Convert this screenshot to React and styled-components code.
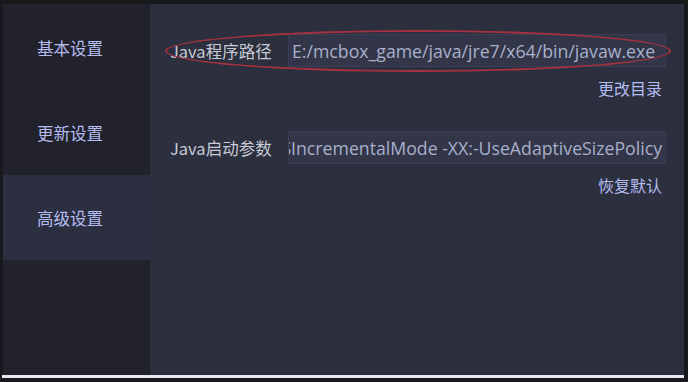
import React from 'react';
import styled, { createGlobalStyle } from 'styled-components';

const GlobalStyle = createGlobalStyle`
	html, body {
		margin: 0;
		padding: 0;
		background: #18191d;
	}
	#root {
		width: 688px;
		height: 382px;
		overflow: hidden;
	}
`;

const MENU = ['基本设置', '更新设置', '高级设置'];

const App = () => {
	return (
		<>
			<GlobalStyle />
			<S_FRAME>
				<S_WINDOW>
					<S_SIDEBAR>
						{MENU.map((item, i) => (
							<S_MENU_ITEM key={item} active={i === 2}>
								{item}
							</S_MENU_ITEM>
						))}
					</S_SIDEBAR>
					<S_MAIN>
						<S_FIELD>
							<S_ROW>
								<S_LABEL>Java程序路径</S_LABEL>
								<S_INPUT>E:/mcbox_game/java/jre7/x64/bin/javaw.exe</S_INPUT>
								<S_MARK />
							</S_ROW>
							<S_LINK>更改目录</S_LINK>
						</S_FIELD>
						<S_FIELD>
							<S_ROW>
								<S_LABEL>Java启动参数</S_LABEL>
								<S_INPUT scrolled>
									<span>-XX:+UseConcMarkSweepGC -XX:+CMSIncrementalMode -XX:-UseAdaptiveSizePolicy</span>
								</S_INPUT>
							</S_ROW>
							<S_LINK>恢复默认</S_LINK>
						</S_FIELD>
					</S_MAIN>
				</S_WINDOW>
				<S_STRIP />
			</S_FRAME>
		</>
	);
};

const S_FRAME = styled.div`
	display: flex;
	flex-direction: column;
	height: 382px;
	padding: 4px 4px 0 3px;
	box-sizing: border-box;
`;

const S_WINDOW = styled.div`
	display: flex;
	height: 371px;
	font-family: 'Noto Sans CJK SC', 'Noto Sans', sans-serif;
`;

const S_STRIP = styled.div`
	height: 3px;
	margin-left: -1px;
	background: #e9eaee;
`;

const S_SIDEBAR = styled.div`
	width: 147px;
	flex-shrink: 0;
	padding-top: 1px;
	background: #21222b;
	display: flex;
	flex-direction: column;
`;

const S_MENU_ITEM = styled.div`
	height: 85px;
	display: flex;
	align-items: center;
	padding-left: 34px;
	font-size: 16.5px;
	color: #b5bdf0;
	white-space: nowrap;
	background: ${(p) => (p.active ? '#2b2f3f' : 'transparent')};
`;

const S_MAIN = styled.div`
	flex: 1;
	min-width: 0;
	background: #2b2f3e;
	padding: 30px 18px 0 20px;
	display: flex;
	flex-direction: column;
	gap: 31px;
`;

const S_FIELD = styled.div`
	display: flex;
	flex-direction: column;
	gap: 9px;
`;

const S_ROW = styled.div`
	position: relative;
	display: flex;
	align-items: center;
	gap: 16px;
`;

const S_LABEL = styled.div`
	width: 102px;
	flex-shrink: 0;
	font-size: 16.5px;
	color: #c9cbd7;
	white-space: nowrap;
`;

const S_INPUT = styled.div`
	flex: 1;
	min-width: 0;
	height: 33px;
	box-sizing: border-box;
	display: flex;
	align-items: center;
	justify-content: ${(p) => (p.scrolled ? 'flex-end' : 'flex-start')};
	padding: 0 3px;
	background: #323648;
	border: 1px solid #3a3f55;
	overflow: hidden;
	white-space: nowrap;
	font-family: 'Open Sans', 'Noto Sans', sans-serif;
	font-size: 17.7px;
	color: #a9afcb;
	span {
		flex-shrink: 0;
	}
`;

const S_MARK = styled.div`
	position: absolute;
	left: -5px;
	right: -5px;
	top: -4px;
	bottom: -5px;
	border: 2px solid #a8313f;
	border-radius: 50%;
	pointer-events: none;
`;

const S_LINK = styled.div`
	align-self: flex-end;
	margin-right: 4px;
	font-size: 16px;
	color: #b5bcf0;
`;

export default App;
